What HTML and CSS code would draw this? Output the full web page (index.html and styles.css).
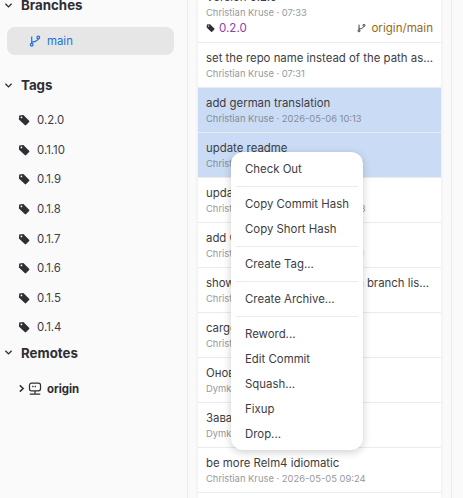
FILE: index.html
```html
<!DOCTYPE html>
<html lang="en">
<head>
<meta charset="utf-8">
<title>Commits</title>
<link rel="stylesheet" href="styles.css">
</head>
<body>
<svg class="defs" width="0" height="0" aria-hidden="true">
  <symbol id="tag" viewBox="0 0 16 16"><path fill="currentColor" fill-rule="evenodd" d="M1.6 1.9 7.2 1.4 14.8 9a1.3 1.3 0 0 1 0 1.8l-4 4a1.3 1.3 0 0 1-1.8 0L1.2 7.2ZM4.6 3.4a1.2 1.2 0 1 0 0 2.4 1.2 1.2 0 0 0 0-2.4Z"/></symbol>
  <symbol id="branch" viewBox="0 0 16 16"><g fill="none" stroke="currentColor" stroke-width="1.6"><circle cx="3.6" cy="13" r="1.8"/><circle cx="12.4" cy="3.4" r="1.8"/><path d="M3.6 11.2V2M3.6 9.5c3 0 5.5-.5 7-2.2.9-1 1.6-1.4 1.8-2.1"/></g></symbol>
  <symbol id="chev" viewBox="0 0 16 16"><path fill="none" stroke="currentColor" stroke-width="2.4" d="M2.5 5 8 10.5 13.5 5"/></symbol>
</svg>
<div class="app">
  <aside class="sidebar">
    <div class="sidebar-inner">
      <h2 class="section-head"><svg class="chev"><use href="#chev"/></svg>Branches</h2>
      <div class="branch"><svg class="branch-icon"><use href="#branch"/></svg>main</div>
      <h2 class="section-head tags-head"><svg class="chev"><use href="#chev"/></svg>Tags</h2>
      <ul class="tags">
        <li><svg class="tag-icon"><use href="#tag"/></svg>0.2.0</li>
        <li><svg class="tag-icon"><use href="#tag"/></svg>0.1.10</li>
        <li><svg class="tag-icon"><use href="#tag"/></svg>0.1.9</li>
        <li><svg class="tag-icon"><use href="#tag"/></svg>0.1.8</li>
        <li><svg class="tag-icon"><use href="#tag"/></svg>0.1.7</li>
        <li><svg class="tag-icon"><use href="#tag"/></svg>0.1.6</li>
        <li><svg class="tag-icon"><use href="#tag"/></svg>0.1.5</li>
        <li><svg class="tag-icon"><use href="#tag"/></svg>0.1.4</li>
      </ul>
      <h2 class="section-head remotes-head"><svg class="chev"><use href="#chev"/></svg>Remotes</h2>
      <div class="remote">
        <svg class="chev-right" viewBox="0 0 16 16"><path fill="none" stroke="currentColor" stroke-width="2.6" d="M5 2.5 11 8 5 13.5"/></svg>
        <svg class="server" viewBox="0 0 16 16"><g fill="none" stroke="currentColor" stroke-width="1.4"><rect x="1.7" y="1.2" width="12.6" height="9" rx="2.4"/><path d="M8 10.2V14M2 13.8h12"/></g><path fill="currentColor" d="M4.8 4.4h1.5v1.5H4.8ZM7.6 4.4h1.5v1.5H7.6Z"/></svg>
        <span>origin</span>
      </div>
    </div>
  </aside>
  <main class="main">
    <div class="list">
      <article class="row first">
        <div class="title">Version 0.2.0</div>
        <div class="meta">Christian Kruse · 07:33</div>
        <div class="refs">
          <span class="ref-tag"><svg class="ref-icon"><use href="#tag"/></svg>0.2.0</span>
          <span class="ref-branch"><svg class="ref-icon"><use href="#branch"/></svg>origin/main</span>
        </div>
      </article>
      <article class="row"><div class="title">set the repo name instead of the path as...</div><div class="meta">Christian Kruse · 07:31</div></article>
      <article class="row selected"><div class="title">add german translation</div><div class="meta">Christian Kruse · 2026-05-06 10:13</div></article>
      <article class="row selected"><div class="title">update readme</div><div class="meta">Christian Kruse · 2026-05-06 10:02</div></article>
      <article class="row"><div class="title">update screenshots</div><div class="meta">Christian Kruse · 2026-05-06 09:58</div></article>
      <article class="row"><div class="title">add German locale</div><div class="meta">Christian Kruse · 2026-05-06 09:41</div></article>
      <article class="row"><div class="title">show the current upstream in branch lis...</div><div class="meta">Christian Kruse · 2026-05-05 18:12</div></article>
      <article class="row"><div class="title">cargo update</div><div class="meta">Christian Kruse · 2026-05-05 17:30</div></article>
      <article class="row"><div class="title">Оновлення перекладу</div><div class="meta">Dymko · 2026-05-05 12:20</div></article>
      <article class="row"><div class="title">Заватаження</div><div class="meta">Dymko · 2026-05-05 11:48</div></article>
      <article class="row"><div class="title">be more Relm4 idiomatic</div><div class="meta">Christian Kruse · 2026-05-05 09:24</div></article>
      <article class="row"></article>
    </div>
    <div class="side-pane"></div>
  </main>
</div>
<nav class="menu">
  <div class="item">Check Out</div>
  <hr class="sep">
  <div class="item">Copy Commit Hash</div>
  <div class="item">Copy Short Hash</div>
  <hr class="sep">
  <div class="item">Create Tag...</div>
  <hr class="sep">
  <div class="item">Create Archive...</div>
  <hr class="sep">
  <div class="item">Reword...</div>
  <div class="item">Edit Commit</div>
  <div class="item">Squash...</div>
  <div class="item">Fixup</div>
  <div class="item">Drop...</div>
</nav>
</body>
</html>
```
FILE: styles.css
```css
* { box-sizing: border-box; }
html, body { margin: 0; height: 100%; overflow: hidden; }
body { font-family: Inter, "Noto Sans", sans-serif; color: #2e2e33; background: #fafafb; position: relative; }
.defs { position: absolute; }
.app { display: flex; height: 498px; overflow: hidden; }

.sidebar { width: 188px; flex: none; border-right: 1px solid #ebebed; background: #fafafb; overflow: hidden; }
.sidebar-inner { margin-top: -5px; padding: 0 13px 0 7px; }
.section-head { display: flex; align-items: center; gap: 8px; height: 20px; margin: 0 0 0 -3px; font-size: 13.3px; font-weight: 700; color: #2e2e33; }
.chev { width: 9px; height: 9px; }
.branch { display: flex; align-items: center; height: 28px; margin-top: 12px; padding-left: 22px; gap: 6px; border-radius: 8px; background: #e6e6e7; color: #1c71d8; font-size: 11.4px; }
.branch-icon { width: 12px; height: 12px; }
.tags-head { margin-top: 20px; }
.tags { list-style: none; margin: 10.5px 0 0; padding: 0; }
.tags li { display: flex; align-items: center; gap: 7px; height: 29.6px; padding-left: 11px; font-size: 11.4px; color: #3d3d42; }
.tag-icon { width: 12px; height: 12px; color: #2e2e33; }
.remotes-head { margin-top: 0.5px; }
.remote { display: flex; align-items: center; height: 20px; margin-top: 16px; padding-left: 10px; gap: 2px; font-size: 11.4px; font-weight: 700; }
.chev-right { width: 9px; height: 9px; }
.server { width: 14px; height: 14px; margin-right: 3px; }

.main { flex: 1; display: flex; padding-left: 10px; background: #fafafb; }
.list { width: 243px; flex: none; margin-top: -18px; background: #ebebed; box-shadow: 0 0 4px rgba(0,0,0,.08); display: flex; flex-direction: column; gap: 1px; }
.row { height: 44px; flex: none; padding: 7px 8px 0; background: #fff; }
.row.first { height: 60px; }
.row.selected { background: #cadcf5; }
.title { font-size: 11.4px; line-height: 16px; color: #3d3d42; white-space: nowrap; overflow: hidden; }
.meta { font-size: 9.4px; line-height: 13px; margin-top: 1px; color: #98989c; white-space: nowrap; }
.selected .meta { color: #858b96; }
.refs { display: flex; justify-content: space-between; align-items: center; font-size: 11.6px; margin-top: 2px; }
.ref-tag { display: flex; align-items: center; gap: 4px; color: #9141ac; }
.ref-branch { display: flex; align-items: center; gap: 5px; color: #986a1c; }
.ref-icon { width: 9px; height: 10px; color: #2e2e33; }
.side-pane { width: 12px; margin-left: auto; border-left: 1px solid #ebebed; }

.menu { position: absolute; left: 231px; top: 152px; width: 132px; height: 298px; padding: 5px 5px 0; background: #fff; border-radius: 12px; box-shadow: 0 2px 8px rgba(0,0,0,.2); font-size: 11.4px; color: #3d3d42; }
.item { height: 25px; line-height: 25px; padding-left: 9px; white-space: nowrap; }
.sep { border: 0; height: 1px; margin: 4.4px 0 4.5px; background: #ebebed; }
```
